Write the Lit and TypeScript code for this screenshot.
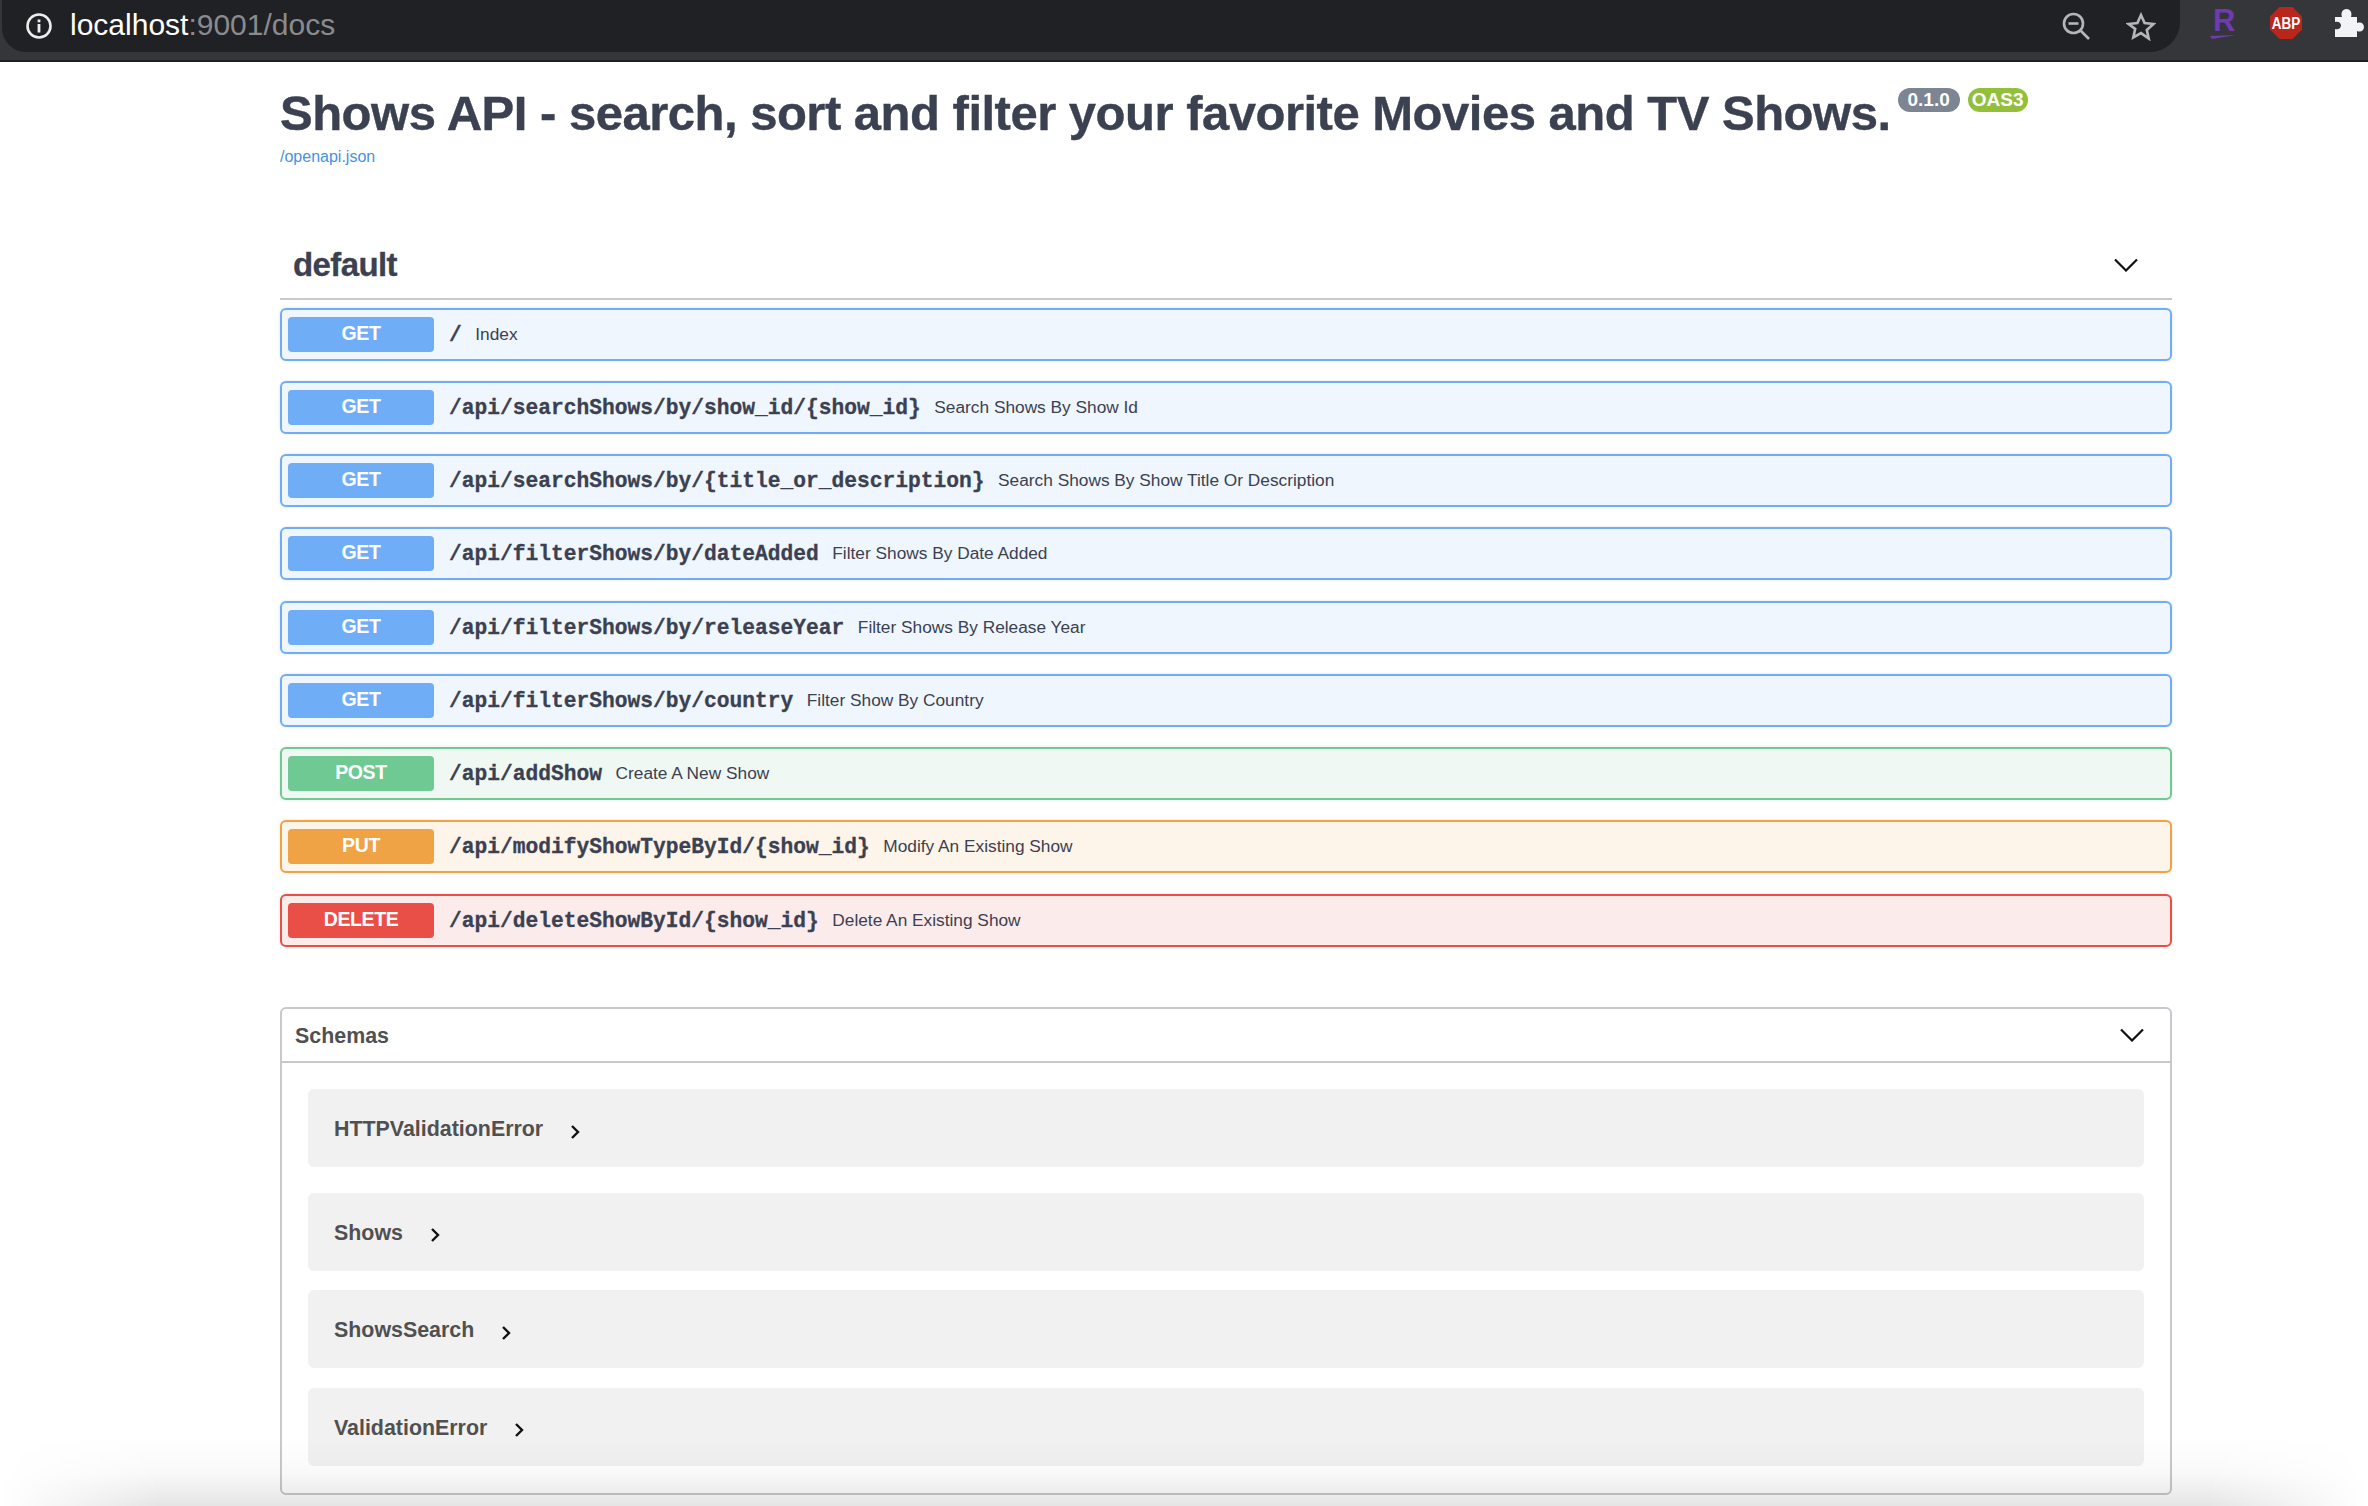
import {html, css, LitElement} from 'lit';
import {customElement} from 'lit/decorators.js';

const ops = [
  {m: 'GET', k: 'get', p: '/', s: 'Index'},
  {m: 'GET', k: 'get', p: '/api/searchShows/by/show_id/{show_id}', s: 'Search Shows By Show Id'},
  {m: 'GET', k: 'get', p: '/api/searchShows/by/{title_or_description}', s: 'Search Shows By Show Title Or Description'},
  {m: 'GET', k: 'get', p: '/api/filterShows/by/dateAdded', s: 'Filter Shows By Date Added'},
  {m: 'GET', k: 'get', p: '/api/filterShows/by/releaseYear', s: 'Filter Shows By Release Year'},
  {m: 'GET', k: 'get', p: '/api/filterShows/by/country', s: 'Filter Show By Country'},
  {m: 'POST', k: 'post', p: '/api/addShow', s: 'Create A New Show'},
  {m: 'PUT', k: 'put', p: '/api/modifyShowTypeById/{show_id}', s: 'Modify An Existing Show'},
  {m: 'DELETE', k: 'delete', p: '/api/deleteShowById/{show_id}', s: 'Delete An Existing Show'},
];

const models = ['HTTPValidationError', 'Shows', 'ShowsSearch', 'ValidationError'];

@customElement('app-root')
export class AppRoot extends LitElement {
  static styles = css`
    :host {
      display: block;
      position: relative;
      width: 2368px;
      height: 1506px;
      overflow: hidden;
      background: #fff;
      font-family: 'Liberation Sans', Arial, sans-serif;
      color: #3b4151;
    }

    .chrome {
      display: flex;
      align-items: flex-start;
      height: 60px;
      background: #35363a;
      border-bottom: 2px solid #1f2023;
    }

    .omnibox {
      display: flex;
      align-items: center;
      box-sizing: border-box;
      width: 2178px;
      height: 52px;
      margin-left: 2px;
      padding: 0 24px 0 23px;
      background: #202124;
      border-radius: 0 0 30px 24px;
    }

    .url {
      flex: 1;
      margin: 0 0 4px 17px;
      font-size: 30px;
      line-height: 47px;
      color: #fff;
    }

    .url span {
      color: #8a8b8e;
    }

    .omni-icons {
      display: flex;
      align-items: center;
      gap: 36px;
      padding-left: 1px;
    }

    .ext {
      display: flex;
      align-items: center;
      height: 46px;
    }

    .ext-r {
      margin-left: 28px;
    }

    .ext-abp {
      margin-left: 30px;
    }

    .ext-puzzle {
      margin-left: 32px;
    }

    .page {
      padding: 0 196px 0 280px;
    }

    .title-row {
      display: flex;
      align-items: flex-start;
      padding-top: 21px;
    }

    h1 {
      margin: 0;
      font-size: 49px;
      line-height: 61px;
      letter-spacing: -0.5px;
      font-weight: 700;
      white-space: nowrap;
      -webkit-text-stroke: 0.4px #3b4151;
    }

    .badge {
      margin-top: 5px;
      height: 24px;
      line-height: 24px;
      border-radius: 12px;
      font-size: 19px;
      font-weight: 700;
      color: #fff;
    }

    .version {
      margin-left: 7px;
      padding: 0 10px;
      background: #7d8492;
    }

    .oas {
      margin-left: 8px;
      padding: 0 4px;
      background: #93bf3b;
    }

    .link {
      display: block;
      margin-top: 2px;
      font-size: 16px;
      line-height: 22px;
      color: #4990e2;
    }

    .tag {
      display: flex;
      align-items: center;
      justify-content: space-between;
      box-sizing: border-box;
      height: 71px;
      margin-top: 61px;
      padding: 2px 34px 0 13px;
      border-bottom: 2px solid #c9c9cd;
      font-size: 33px;
      letter-spacing: -0.6px;
      font-weight: 700;
      -webkit-text-stroke: 0.3px #3b4151;
    }

    .ops {
      display: flex;
      flex-direction: column;
      gap: 20.25px;
      margin-top: 7.5px;
    }

    .op {
      display: flex;
      align-items: center;
      box-sizing: border-box;
      height: 53px;
      padding: 0 5px 0 6px;
      border: 2.5px solid;
      border-radius: 6px;
      box-shadow: 0 0 3px rgba(0, 0, 0, 0.12);
    }

    .get {
      background: #eff6fe;
      border-color: #70adf7;
    }

    .post {
      background: #eff8f3;
      border-color: #6fc992;
    }

    .put {
      background: #fdf4ea;
      border-color: #f0a345;
    }

    .delete {
      background: #fbebeb;
      border-color: #ea4f47;
    }

    .method {
      width: 146px;
      height: 35px;
      line-height: 32px;
      border-radius: 4px;
      text-align: center;
      font-size: 19.5px;
      letter-spacing: -0.4px;
      font-weight: 700;
      color: #fff;
    }

    .get .method {
      background: #70adf7;
    }

    .post .method {
      background: #6fc992;
    }

    .put .method {
      background: #f0a345;
    }

    .delete .method {
      background: #ea4f47;
    }

    .path {
      margin-left: 15px;
      padding-top: 1px;
      font-family: 'Liberation Mono', monospace;
      font-size: 21.25px;
      font-weight: 700;
      white-space: nowrap;
      -webkit-text-stroke: 0.3px #3b4151;
    }

    .summary {
      margin-left: 13.5px;
      font-size: 17.3px;
      white-space: nowrap;
    }

    .schemas {
      box-sizing: border-box;
      height: 488px;
      margin-top: 60px;
      border: 2.5px solid #c9c9cd;
      border-radius: 6px;
    }

    .schemas-head {
      display: flex;
      align-items: center;
      justify-content: space-between;
      box-sizing: border-box;
      height: 54px;
      padding: 3px 26px 0 13px;
      border-bottom: 2.5px solid #c9c9cd;
      font-size: 21.4px;
      font-weight: 700;
      color: #505050;
    }

    .schemas-head svg {
      margin-top: -3px;
    }

    .model-list {
      display: flex;
      flex-direction: column;
      gap: 19.5px;
      padding: 26.5px 26px 0 26px;
    }

    .model {
      display: flex;
      align-items: center;
      box-sizing: border-box;
      height: 78px;
      padding: 3px 0 0 26px;
      background: #f1f1f1;
      border-radius: 6px;
      font-size: 21.4px;
      font-weight: 700;
      color: #505050;
    }

    .model:first-child {
      margin-bottom: 6px;
    }

    .model svg {
      margin: 4px 0 0 27px;
    }

    .fade {
      position: absolute;
      left: 0;
      right: 0;
      bottom: 0;
      height: 68px;
      background: linear-gradient(to bottom, rgba(0, 0, 0, 0), rgba(0, 0, 0, 0.025) 50%, rgba(0, 0, 0, 0.1));
      -webkit-mask-image: linear-gradient(to right, transparent 0, #000 160px, #000 2208px, transparent 100%);
      mask-image: linear-gradient(to right, transparent 0, #000 160px, #000 2208px, transparent 100%);
      pointer-events: none;
    }
  `;

  render() {
    return html`
      ${this.renderChrome()}
      <div class="page">
        <div class="title-row">
          <h1>Shows API - search, sort and filter your favorite Movies and TV Shows.</h1>
          <span class="badge version">0.1.0</span>
          <span class="badge oas">OAS3</span>
        </div>
        <a class="link">/openapi.json</a>
        <div class="tag">default ${this.renderChevronDown()}</div>
        <div class="ops">
          ${ops.map(
            (op) => html`<div class="op ${op.k}">
              <span class="method">${op.m}</span>
              <span class="path">${op.p}</span>
              <span class="summary">${op.s}</span>
            </div>`
          )}
        </div>
        <div class="schemas">
          <div class="schemas-head">Schemas ${this.renderChevronDown()}</div>
          <div class="model-list">
            ${models.map(
              (name) => html`<div class="model">
                ${name}
                <svg width="10" height="16" viewBox="0 0 10 16" fill="none">
                  <path d="M2 2l6 6-6 6" stroke="#111" stroke-width="2.4" />
                </svg>
              </div>`
            )}
          </div>
        </div>
      </div>
      <div class="fade"></div>
    `;
  }

  private renderChevronDown() {
    return html`<svg width="24" height="14" viewBox="0 0 24 14" fill="none">
      <path d="M1 1.5l11 11 11-11" stroke="#111" stroke-width="2.2" />
    </svg>`;
  }

  private renderChrome() {
    return html`<div class="chrome">
      <div class="omnibox">
        <svg width="28" height="28" viewBox="0 0 28 28" fill="none">
          <circle cx="14" cy="14" r="11.5" stroke="#eceded" stroke-width="2.6" />
          <rect x="12.6" y="12" width="2.8" height="8.5" fill="#eceded" />
          <rect x="12.6" y="7.5" width="2.8" height="2.8" fill="#eceded" />
        </svg>
        <div class="url">localhost<span>:9001/docs</span></div>
        <div class="omni-icons">
          <svg width="28" height="28" viewBox="0 0 28 28" fill="none" stroke="#b5b6b8" stroke-width="2.6">
            <circle cx="11.5" cy="11.5" r="9.5" />
            <path d="M18.5 18.5L27 27" />
            <path d="M6.5 11.5h10" />
          </svg>
          <svg width="30" height="29" viewBox="0 0 30 29" fill="none" stroke="#b5b6b8" stroke-width="2.6">
            <path d="M15 3l3.6 8.1 8.9.9-6.7 5.900 1.900 8.600L15 21.100l-7.700 4.400 1.900-8.600L2.500 12l8.900-.9z" />
          </svg>
        </div>
      </div>
      <div class="ext ext-r">
        <svg width="32" height="40" viewBox="0 0 32 40">
          <text x="5" y="28" font-family="Liberation Sans" font-size="31" font-weight="700" fill="#6f3bb0">R</text>
          <path d="M2 33l26-1-24 4z" fill="#6f3bb0" />
        </svg>
      </div>
      <div class="ext ext-abp">
        <svg width="32" height="32" viewBox="0 0 32 32">
          <path d="M9.500 0h13L32 9.500v13L22.500 32h-13L0 22.500v-13z" fill="#b9261c" />
          <text x="16" y="17.5" transform="scale(1 1.26)" text-anchor="middle" font-family="Liberation Sans" font-size="13.500" font-weight="700" fill="#fff">ABP</text>
        </svg>
      </div>
      <div class="ext ext-puzzle">
        <svg width="30" height="30" viewBox="0 0 30 30">
          <path d="M1 9h7c-1.500-4 .5-8 4.500-8s6 4 4.500 8h6v6c4-1.500 7 .5 7 4s-3 5.500-7 4v6H1v-8c3 1 6-.5 6-3.500S4 13 1 14z" fill="#f1f3f4" />
        </svg>
      </div>
    </div>`;
  }
}
